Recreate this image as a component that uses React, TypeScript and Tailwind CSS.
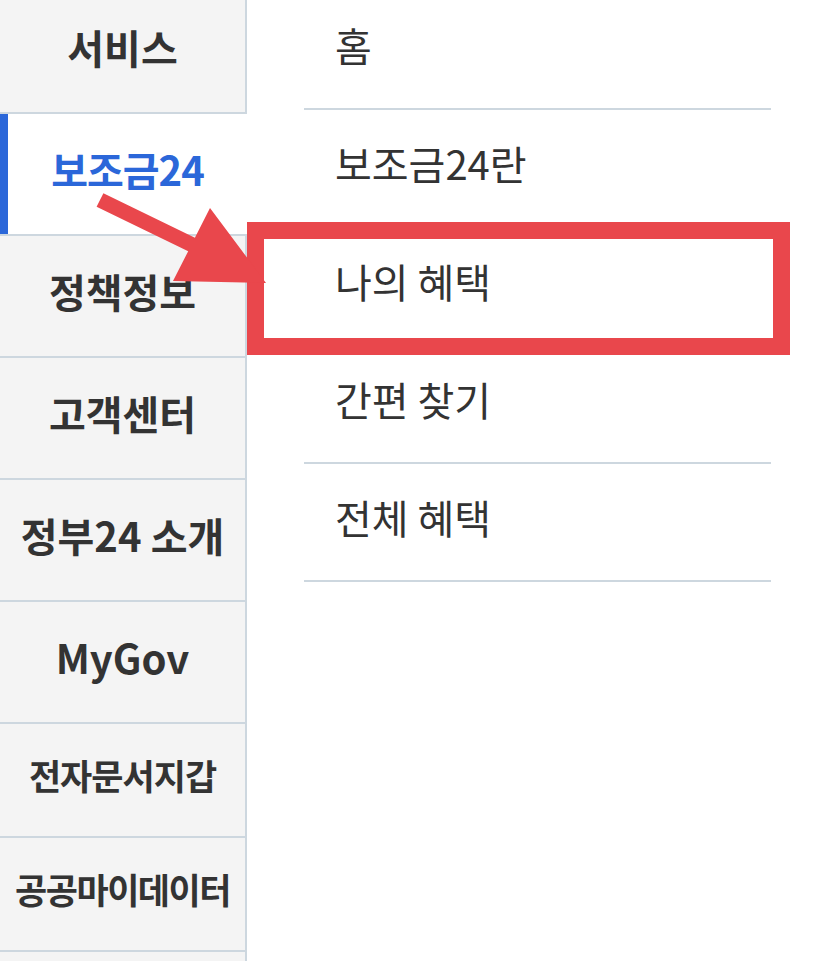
import React from 'react';

const sideItems: { label: string; h: string; size: string; active?: boolean }[] = [
  { label: '서비스', h: 'h-[122px]', size: 'text-[40px]' },
  { label: '보조금24', h: 'h-[122px]', size: 'text-[40px]', active: true },
  { label: '정책정보', h: 'h-[122px]', size: 'text-[40px]' },
  { label: '고객센터', h: 'h-[122px]', size: 'text-[40px]' },
  { label: '정부24 소개', h: 'h-[122px]', size: 'text-[40px]' },
  { label: 'MyGov', h: 'h-[122px]', size: 'text-[40px]' },
  { label: '전자문서지갑', h: 'h-[114px]', size: 'text-[35px] tracking-[-1px]' },
  { label: '공공마이데이터', h: 'h-[114px]', size: 'text-[35px] tracking-[-1.5px]' },
  { label: '', h: 'h-[114px]', size: 'text-[35px]' },
];

const subItems = ['홈', '보조금24란', '나의 혜택', '간편 찾기', '전체 혜택'];

const SideItem = ({ label, h, size, active = false }: { label: string; h: string; size: string; active?: boolean }) => {
  if (active) {
    return (
      <div className={`${h} flex bg-white border-b-2 border-[#cdd7df]`}>
        <div className="w-2 bg-[#2b67d9]" />
        <div className={`flex-1 flex items-center justify-center pb-[10px] font-bold ${size} text-[#2b67d9] tracking-[-1px]`}>
          {label}
        </div>
      </div>
    );
  }
  return (
    <div
      className={`${h} flex items-center justify-center pb-[10px] bg-[#f4f4f4] border-b-2 border-r-2 border-[#cdd7df] font-bold ${size} text-[#333333]`}
    >
      {label}
    </div>
  );
};

export default function App() {
  return (
    <div
      className="relative w-[828px] h-[961px] overflow-hidden bg-white"
      style={{ fontFamily: '"Noto Sans CJK KR", "Noto Sans", sans-serif' }}
    >
      <div className="-mt-2 flex">
        <aside className="w-[247px] flex-shrink-0 flex flex-col">
          {sideItems.map((it, i) => (
            <SideItem key={i} label={it.label} h={it.h} size={it.size} active={it.active} />
          ))}
        </aside>

        <nav className="ml-[57px] w-[467px] flex flex-col">
          {subItems.map((label) => (
            <div
              key={label}
              className="h-[118px] flex items-center pl-[31px] pb-[10px] border-b-2 border-[#cdd7df] text-[40px] text-[#333333]"
            >
              {label}
            </div>
          ))}
        </nav>
      </div>

      {/* highlight box */}
      <div className="absolute left-[247px] top-[222px] w-[543px] h-[133px] border-[17px] border-[#e9474c]" />

      {/* arrow */}
      <svg className="absolute inset-0 pointer-events-none" width="828" height="961" viewBox="0 0 828 961">
        <polygon
          points="103.4,193.3 194.9,237.8 210,208 266,283 173,281 188.2,251.2 96.6,206.7"
          fill="#e9474c"
        />
      </svg>
    </div>
  );
}
